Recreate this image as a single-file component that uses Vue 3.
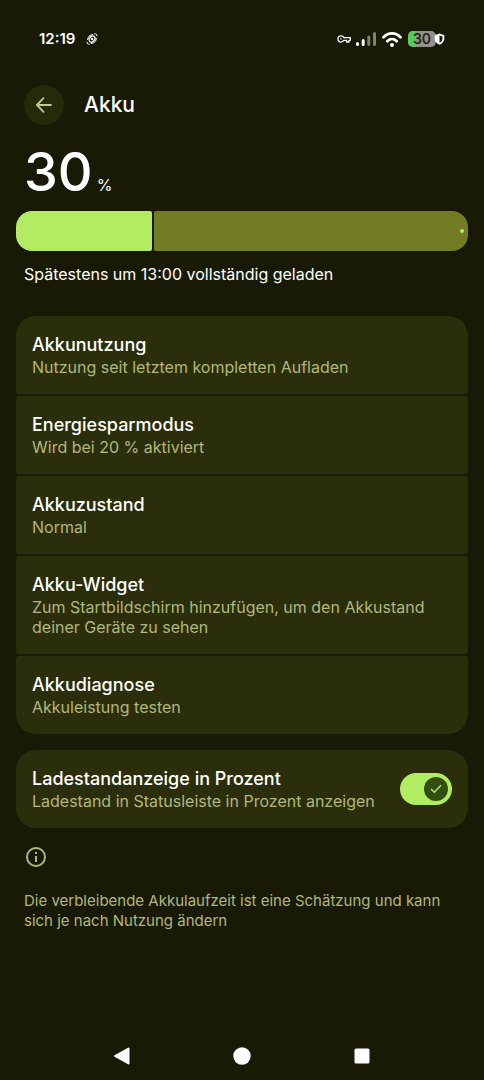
<script setup>
import { ref } from 'vue'

const level = ref(30)
const showPercent = ref(true)

const entries = [
  { title: 'Akkunutzung', text: 'Nutzung seit letztem kompletten Aufladen' },
  { title: 'Energiesparmodus', text: 'Wird bei 20 % aktiviert' },
  { title: 'Akkuzustand', text: 'Normal' },
  { title: 'Akku-Widget', text: 'Zum Startbildschirm hinzufügen, um den Akkustand deiner Geräte zu sehen' },
  { title: 'Akkudiagnose', text: 'Akkuleistung testen' },
]
</script>

<template>
  <div class="screen">
    <div class="status">
      <span class="time">12:19</span>
      <svg class="ring" width="12" height="12" viewBox="0 0 12 12" fill="none" stroke="currentColor">
        <ellipse cx="6" cy="6" rx="2.600" ry="3.400" stroke-width="1.300" transform="rotate(35 6 6)" />
        <circle cx="6" cy="6" r="1.200" fill="currentColor" stroke="none" />
        <path d="M1.600 7C1.600 4 4 1.600 7.200 1.400M8.200 .9C9.800.4 11.200 1.400 11 3.200M10.400 5C10.400 8 8 10.400 4.800 10.600M3.800 11.100C2.200 11.600.8 10.600 1 8.800" stroke-width="1" />
      </svg>
      <div class="indicators">
        <svg width="14" height="8" viewBox="0 0 14 8" fill="none" stroke="currentColor" stroke-width="1.3" stroke-linejoin="round">
          <path d="M6.800 2.600H13.300V5.300H12V7H9.500V5.300H6.800A3.100 3.100 0 1 1 6.800 2.600Z" />
          <circle cx="3.900" cy="4" r=".8" fill="currentColor" stroke="none" />
        </svg>
        <svg class="signal" width="20" height="14" viewBox="0 0 20 14" fill="none" stroke="currentColor" stroke-width="3" stroke-linecap="round">
          <path d="M1.500 11.500V12.500M7.200 8.500V12.500" />
          <path d="M12.800 5V12.500M18.500 1.500V12.500" opacity=".45" />
        </svg>
        <svg class="wifi" width="20" height="15" viewBox="0 0 20 15" fill="none" stroke="currentColor" stroke-width="2.800" stroke-linecap="round">
          <path d="M1.500 5.200C6.500.2 13.500.2 18.500 5.200M5.300 9.200C8 6.500 12 6.500 14.700 9.200" />
          <circle cx="10" cy="13" r="2" fill="currentColor" stroke="none" />
        </svg>
        <span class="battery">
          <span class="battery-fill" :style="{ width: level + '%' }"></span>
          <span class="battery-text">{{ level }}</span>
        </span>
        <svg class="shield" width="11" height="12" viewBox="0 0 11 12">
          <path d="M5.500.5L10.300 2.200V5.500C10.300 8.500 8.300 10.700 5.500 11.700C2.700 10.700.7 8.500.7 5.500V2.200Z" fill="currentColor" />
          <path d="M5.500 2.600L8.400 3.600V5.800C8.400 7.700 7.300 9 5.500 9.800Z" fill="#191a05" />
        </svg>
      </div>
    </div>

    <header class="top">
      <button class="back" type="button" aria-label="Zurück">
        <svg width="16" height="16" viewBox="0 0 16 16" fill="none" stroke="currentColor" stroke-width="1.800" stroke-linecap="round" stroke-linejoin="round">
          <path d="M15 8H1M7.500 1.200L.9 8L7.500 14.800" />
        </svg>
      </button>
      <h1>Akku</h1>
    </header>

    <main>
      <div class="level"><span class="number">{{ level }}</span><span class="unit">%</span></div>
      <div class="bar">
        <div class="charged" :style="{ width: level + '%' }"></div>
        <div class="rest"><i></i></div>
      </div>
      <p class="eta">Spätestens um 13:00 vollständig geladen</p>

      <div class="group">
        <button v-for="entry in entries" :key="entry.title" class="card" type="button">
          <span class="title">{{ entry.title }}</span>
          <span class="text">{{ entry.text }}</span>
        </button>
      </div>

      <div class="group">
        <label class="card toggle-card">
          <span class="labels">
            <span class="title">Ladestandanzeige in Prozent</span>
            <span class="text">Ladestand in Statusleiste in Prozent anzeigen</span>
          </span>
          <span class="switch">
            <input v-model="showPercent" type="checkbox" role="switch" />
            <span class="thumb">
              <svg width="12" height="10" viewBox="0 0 12 10" fill="none" stroke="currentColor" stroke-width="1.500"><path d="M1 5L4.300 8.300L11 1.300" /></svg>
            </span>
          </span>
        </label>
      </div>

      <footer class="info">
        <svg width="20" height="20" viewBox="0 0 20 20" fill="none" stroke="currentColor" stroke-width="2">
          <circle cx="10" cy="10" r="9" />
          <path d="M10 9V15M10 5V7" />
        </svg>
        <p>Die verbleibende Akkulaufzeit ist eine Schätzung und kann sich je nach Nutzung ändern</p>
      </footer>
    </main>

    <nav class="nav">
      <button type="button" aria-label="Zurück">
        <svg width="18" height="18" viewBox="0 0 18 18"><path d="M2 9L15.500 1.500V16.500Z" fill="currentColor" stroke="currentColor" stroke-width="2" stroke-linejoin="round" /></svg>
      </button>
      <button type="button" aria-label="Startseite">
        <svg width="18" height="18" viewBox="0 0 18 18"><circle cx="9" cy="9" r="8.700" fill="currentColor" /></svg>
      </button>
      <button type="button" aria-label="Übersicht">
        <svg width="18" height="18" viewBox="0 0 18 18"><rect x="1.500" y="1.500" width="15" height="15" rx="1.500" fill="currentColor" /></svg>
      </button>
    </nav>
  </div>
</template>

<style>
body {
  background: #191a05;
}
</style>

<style scoped>
.screen {
  min-height: 100vh;
  box-sizing: border-box;
  display: flex;
  flex-direction: column;
  background: #191a05;
  color: #fff;
  font-family: "Inter", "Noto Sans", sans-serif;
  font-size: 16px;
  line-height: 20px;
}
button {
  border: 0;
  padding: 0;
  background: none;
  color: inherit;
  font: inherit;
  text-align: left;
}
svg {
  display: block;
  flex: none;
}
h1, p {
  margin: 0;
}
.status {
  display: flex;
  align-items: center;
  height: 20px;
  padding: 29px 39px 0;
}
.time {
  font-size: 15px;
  font-weight: 600;
}
.ring {
  margin-left: 11px;
}
.indicators {
  display: flex;
  align-items: center;
  margin-left: auto;
}
.signal {
  margin-left: 5px;
}
.wifi {
  margin-left: 6px;
}
.battery {
  position: relative;
  display: flex;
  justify-content: center;
  width: 28px;
  height: 16px;
  margin-left: 6px;
  border-radius: 5px;
  overflow: hidden;
  background: #92928a;
}
.battery-fill {
  position: absolute;
  inset: 0 auto 0 0;
  background: #57ca56;
}
.battery-text {
  position: relative;
  color: #23241c;
  font-size: 14px;
  font-weight: 600;
  line-height: 16px;
}
.shield {
  position: relative;
  margin-left: -2px;
}
.top {
  display: flex;
  align-items: center;
  gap: 20px;
  padding: 36px 24px 0;
}
.back {
  display: grid;
  place-items: center;
  width: 40px;
  height: 40px;
  border-radius: 50%;
  background: #26290a;
  color: #c3c992;
}
h1 {
  font-size: 21px;
  font-weight: 500;
  line-height: 28px;
}
main {
  padding: 14px 16px 0;
}
.level {
  display: flex;
  align-items: baseline;
  gap: 4px;
  height: 72px;
  padding-left: 8px;
}
.number {
  font-size: 54px;
  font-weight: 500;
  line-height: 66px;
}
.bar {
  display: flex;
  gap: 2px;
  height: 40px;
}
.charged {
  flex: none;
  border-radius: 16px 2px 2px 16px;
  background: #b2ec63;
}
.rest {
  display: flex;
  flex: 1;
  align-items: center;
  justify-content: flex-end;
  padding-right: 4px;
  border-radius: 2px 16px 16px 2px;
  background: #717c24;
}
.rest i {
  width: 4px;
  height: 4px;
  border-radius: 50%;
  background: #b2ec63;
}
.eta {
  padding: 13px 8px 32px;
}
.group {
  display: flex;
  flex-direction: column;
  gap: 2px;
  margin-bottom: 16px;
  border-radius: 20px;
  overflow: hidden;
}
.card {
  display: flex;
  flex-direction: column;
  padding: 17px 16px;
  border-radius: 3px;
  background: #2b2e0a;
}
.title {
  font-size: 18px;
  font-weight: 500;
  line-height: 24px;
}
.text {
  color: #b1b77f;
}
.toggle-card {
  flex-direction: row;
  align-items: center;
}
.labels {
  display: flex;
  flex: 1;
  flex-direction: column;
}
.switch {
  position: relative;
  display: flex;
  flex: none;
  align-items: center;
  justify-content: flex-end;
  box-sizing: border-box;
  width: 52px;
  height: 32px;
  padding: 4px;
}
.switch input {
  position: absolute;
  inset: 0;
  width: 100%;
  height: 100%;
  margin: 0;
  border-radius: 16px;
  appearance: none;
  background: #b2ec63;
}
.thumb {
  position: relative;
  display: grid;
  place-items: center;
  width: 24px;
  height: 24px;
  border-radius: 50%;
  background: #344d10;
  color: #b2ec63;
  pointer-events: none;
}
.switch:has(input:not(:checked)) {
  justify-content: flex-start;
}
.info {
  padding: 3px 8px 0;
  color: #b1b77f;
  font-size: 15px;
}
.info svg {
  margin: 0 2px 24px;
}
.nav {
  display: flex;
  justify-content: center;
  gap: 102px;
  margin-top: auto;
  padding-bottom: 15px;
}
</style>
